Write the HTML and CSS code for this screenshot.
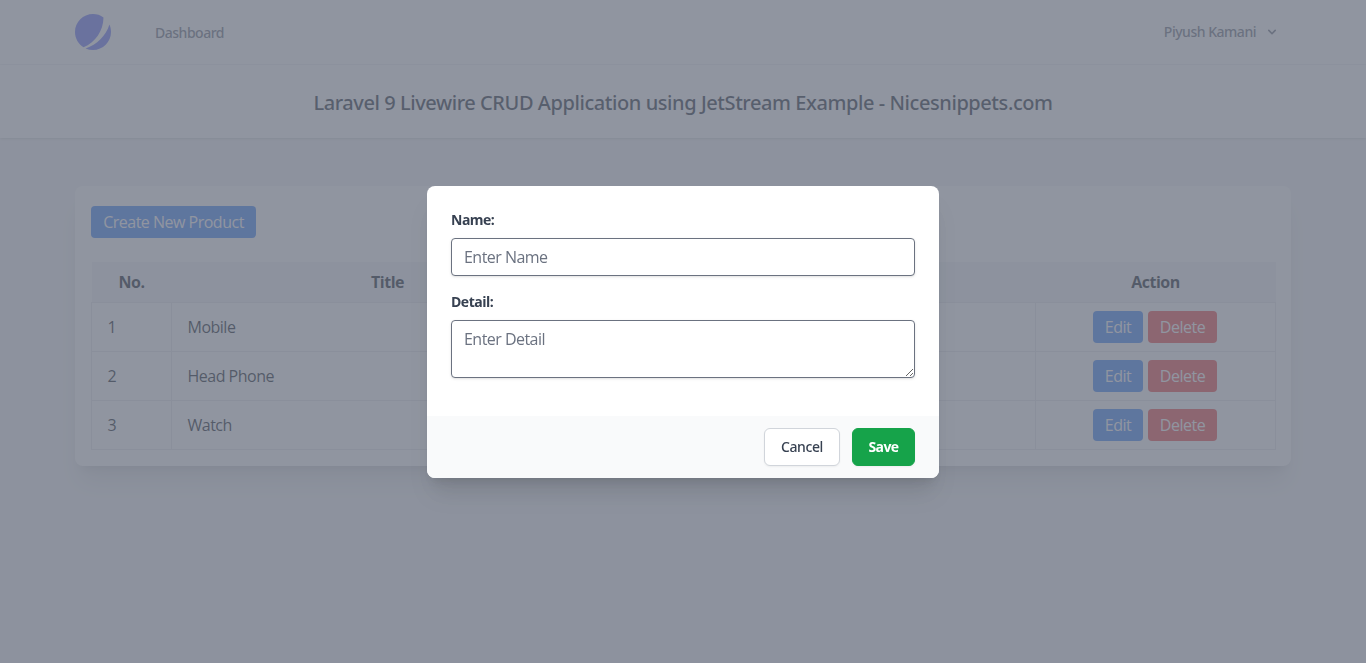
FILE: index.html
```
<!DOCTYPE html>
<html lang="en">
<head>
<meta charset="utf-8">
<title>Laravel</title>
<link rel="stylesheet" href="styles.css">
</head>
<body>
<nav class="nav">
  <div class="nav-inner">
    <svg class="logo" viewBox="0 0 48 48" fill="none"><path d="M11.395 44.428C4.557 40.198 0 32.632 0 24 0 10.745 10.745 0 24 0a23.891 23.891 0 0113.997 4.502c-.2 17.907-11.097 33.245-26.602 39.926z" fill="#6875F5"/><path d="M14.134 45.885A23.914 23.914 0 0024 48c13.255 0 24-10.745 24-24 0-3.516-.756-6.856-2.115-9.866-4.659 15.143-16.608 27.092-31.75 31.751z" fill="#6875F5"/></svg>
    <a class="nav-link">Dashboard</a>
    <button class="user"><span>Piyush Kamani</span>
      <svg class="chevron" viewBox="0 0 20 20" fill="currentColor"><path fill-rule="evenodd" d="M5.293 7.293a1 1 0 011.414 0L10 10.586l3.293-3.293a1 1 0 111.414 1.414l-4 4a1 1 0 01-1.414 0l-4-4a1 1 0 010-1.414z" clip-rule="evenodd"/></svg>
    </button>
  </div>
</nav>
<header class="header"><h2 class="title">Laravel 9 Livewire CRUD Application using JetStream Example - Nicesnippets.com</h2></header>
<main class="main">
  <div class="card">
    <button class="btn btn-blue create">Create New Product</button>
    <table class="table">
      <thead><tr><th class="col-no">No.</th><th>Title</th><th>Body</th><th class="col-action">Action</th></tr></thead>
      <tbody>
        <tr><td>1</td><td>Mobile</td><td></td><td class="actions"><div class="action-row"><button class="btn btn-blue edit">Edit</button><button class="btn btn-red delete">Delete</button></div></td></tr>
        <tr><td>2</td><td>Head Phone</td><td></td><td class="actions"><div class="action-row"><button class="btn btn-blue edit">Edit</button><button class="btn btn-red delete">Delete</button></div></td></tr>
        <tr><td>3</td><td>Watch</td><td></td><td class="actions"><div class="action-row"><button class="btn btn-blue edit">Edit</button><button class="btn btn-red delete">Delete</button></div></td></tr>
      </tbody>
    </table>
  </div>
</main>
<div class="overlay"></div>
<div class="modal-layer">
  <form class="modal">
    <div class="modal-body">
      <label class="label" for="name">Name:</label>
      <input class="field" id="name" type="text" placeholder="Enter Name">
      <label class="label" for="detail">Detail:</label>
      <textarea class="field area" id="detail" placeholder="Enter Detail"></textarea>
    </div>
    <div class="modal-footer">
      <button type="button" class="modal-btn cancel">Cancel</button>
      <button type="button" class="modal-btn save">Save</button>
    </div>
  </form>
</div>
</body>
</html>
```
FILE: styles.css
```
*, *::before, *::after { box-sizing: border-box; }
body { margin: 0; height: 663px; overflow: hidden; background: #f3f4f6; color: #111827; font: 16px/24px "Open Sans", "Noto Sans", sans-serif; letter-spacing: -0.5px; }
button, input, textarea { font: inherit; letter-spacing: inherit; color: inherit; margin: 0; }
.nav { height: 65px; background: #fff; border-bottom: 1px solid #f3f4f6; }
.nav-inner { display: flex; align-items: center; width: 1216px; height: 64px; margin: 0 auto; font-family: "Noto Sans", sans-serif; font-size: 14px; line-height: 20px; font-weight: 500; letter-spacing: -0.48px; color: #6b7280; }
.logo { display: block; width: 36px; height: 36px; }
.nav-link { margin-left: 44px; padding-top: 2px; }
.user { display: flex; align-items: center; margin-left: auto; padding: 8px 11px; border: 0; background: none; }
.chevron { width: 16px; height: 16px; margin-left: 8px; }
.header { position: relative; padding: 25px 0 23px; background: #fff; box-shadow: 0 1px 3px rgba(0,0,0,.1), 0 1px 2px -1px rgba(0,0,0,.1); }
.title { margin: 0; text-align: center; font-family: "Noto Sans", sans-serif; font-size: 20px; line-height: 25px; font-weight: 500; letter-spacing: -0.43px; color: #1f2937; }
.main { padding: 48px 0; }
.card { width: 1216px; margin: 0 auto; padding: 20px 16px 16px; border-radius: 8px; background: #fff; box-shadow: 0 20px 25px -5px rgba(0,0,0,.1), 0 8px 10px -6px rgba(0,0,0,.1); }
.btn { display: block; padding: 4px 12px; border: 0; border-radius: 4px; color: #fff; white-space: nowrap; }
.btn-blue { background: #3b82f6; }
.btn-red { background: #ef4444; }
.create { width: 165px; margin-bottom: 24px; }
.edit { width: 50px; padding: 4px 0; }
.delete { width: 69px; padding: 4px 0; }
.table { width: 1185px; table-layout: fixed; border-collapse: collapse; }
.table th { height: 40px; padding: 8px 16px; background: #f3f4f6; font-weight: 700; }
.table td { height: 49px; padding: 8px 15.5px; border: 1px solid #e5e7eb; }
.table td.actions { padding: 8px 16px 8px 15px; }
.table .col-no { width: 80px; }
.table .col-action { width: 240px; }
.action-row { display: flex; justify-content: center; gap: 5px; }
.overlay { position: fixed; inset: 0; background: #6b7280; opacity: .75; }
.modal-layer { position: fixed; inset: 0; display: flex; justify-content: center; align-items: center; }
.modal { width: 512px; border-radius: 8px; overflow: hidden; background: #fff; box-shadow: 0 20px 25px -5px rgba(0,0,0,.1), 0 8px 10px -6px rgba(0,0,0,.1); }
.modal-body { padding: 24px 24px 22px; }
.label { display: block; margin-bottom: 8px; font-size: 14px; line-height: 20px; font-weight: 700; color: #374151; }
.field { display: block; width: 100%; height: 38px; margin-bottom: 16px; padding: 8px 12px; border: 1px solid #6b7280; border-radius: 4px; background: #fff; line-height: 20px; letter-spacing: -0.53px; box-shadow: 0 1px 3px rgba(0,0,0,.1), 0 1px 2px -1px rgba(0,0,0,.1); }
.field::placeholder { color: #6b7280; opacity: 1; }
.area { height: 58px; resize: vertical; }
.modal-footer { display: flex; justify-content: flex-end; gap: 12px; padding: 12px 24px; background: #f9fafb; }
.modal-btn { height: 38px; padding: 0 15px; border: 1px solid #d1d5db; border-radius: 6px; background: #fff; font-family: "Noto Sans", sans-serif; font-size: 14px; font-weight: 500; letter-spacing: -0.4px; color: #374151; box-shadow: 0 1px 2px rgba(0,0,0,.05); }
.cancel { width: 76px; }
.save { width: 63px; border-color: #16a34a; background: #16a34a; font-family: "Open Sans", sans-serif; font-weight: 700; letter-spacing: -0.6px; color: #fff; }
```
